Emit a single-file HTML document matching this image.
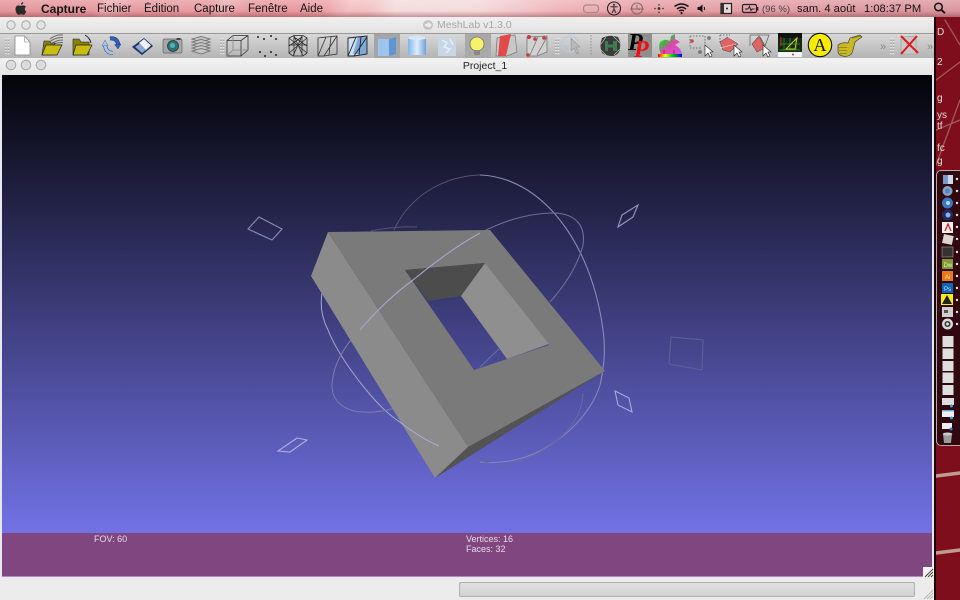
<!DOCTYPE html>
<html lang="fr"><head><meta charset="utf-8"><title>MeshLab</title>
<style>
html,body{margin:0;padding:0;width:960px;height:600px;overflow:hidden;background:#7a0f1c}
body{position:relative;font-family:"Liberation Sans",sans-serif}
.a{position:absolute}
#desk{left:0;top:0;width:960px;height:600px;background:#7e0e1c}
#menu{left:0;top:0;width:960px;height:17px;background:
linear-gradient(180deg,rgba(255,255,255,.22),rgba(255,255,255,0) 65%,rgba(120,40,50,.4)),
linear-gradient(115deg,transparent 0,transparent 90px,rgba(255,255,255,.22) 100px,transparent 125px,transparent 195px,rgba(255,255,255,.2) 205px,transparent 225px,transparent 300px,rgba(255,255,255,.25) 320px,transparent 340px),
linear-gradient(90deg,#e5949b 0,#e69ba0 180px,#e8999f 300px,#eeacb0 350px,#f5dcdc 395px,#f4d8d8 480px,#eeb4b9 560px,#e6a0a6 640px,#e19ca3 800px,#d9959c 960px);
box-sizing:border-box}
.m{position:absolute;top:3px;font-size:11.500px;line-height:13px;color:#111;white-space:nowrap;filter:blur(.2px)}
#win{left:0;top:17px;width:934px;height:583px;background:#ececec}
#tb{left:0;top:17px;width:934px;height:16px;background:linear-gradient(#f0f0f0,#e2e2e2)}
#title{left:437px;top:19px;font-size:10.500px;line-height:13px;color:#a8a8a8;font-weight:normal;white-space:nowrap;filter:blur(.2px)}
#tool{left:0;top:33px;width:934px;height:25px;background:linear-gradient(#d8d8d8,#b4b4b4);border-top:1px solid #989898;box-sizing:border-box}
#sub{left:0;top:58px;width:934px;height:17px;background:linear-gradient(#f2f2f2,#e6e6e6);border-radius:5px 5px 0 0}
#proj{left:0;top:60px;width:970px;text-align:center;font-size:10.500px;line-height:12px;color:#222;filter:blur(.2px)}
#fr{left:0;top:75px;width:934px;height:503px;background:#e8e8f4}
#gl{left:2px;top:75px;width:930px;height:458px;background:linear-gradient(#030308,#7272e6)}
#bar{left:2px;top:533px;width:930px;height:44px;background:#7f4680;border-bottom:1px solid #b58ab8;box-sizing:border-box}
.t{position:absolute;font-size:9px;line-height:10px;color:#e6dae8;white-space:nowrap;filter:blur(.2px)}
#prog{left:459px;top:582px;width:456px;height:15px;box-sizing:border-box;background:linear-gradient(#e0e0e0,#d2d2d2);border:1px solid #b0b0b0;border-radius:2px}
#dock{left:936px;top:170px;width:30px;height:276px;box-sizing:border-box;background:#300810;border:1px solid #b8a8a8;border-radius:5px 0 0 5px}
.d{position:absolute;left:937px;font-size:10px;line-height:11px;color:#e4dcdc;filter:blur(.3px)}
#icons,#scene,#desksvg,#docksvg,#menusvg{position:absolute;left:0;top:0}
#icons,#docksvg,#menusvg{filter:blur(.35px)}
</style></head><body>
<div class="a" id="desk"></div>
<svg id="desksvg" width="960" height="600" viewBox="0 0 960 600" fill="none">
<g stroke="#c9b5a5" stroke-linecap="round">
<path d="M936 80L960 62M945 20L960 45M936 130L960 120M936 165L960 100" stroke-width="1.300" opacity=".45"/>
<path d="M936 476L960 473" stroke-width="3.500" opacity=".85"/>
<path d="M936 553L960 550" stroke-width="3.500" opacity=".85"/>
</g>
</svg>
<span class="d" style="top:27px">D</span><span class="d" style="top:57px">2</span><span class="d" style="top:93px">g</span><span class="d" style="top:110px">ys</span><span class="d" style="top:121px">tf</span><span class="d" style="top:143px">fc</span><span class="d" style="top:156px">g</span>

<div class="a" id="dock"></div>
<svg id="docksvg" width="960" height="600" viewBox="0 0 960 600">
<rect x="943" y="175" width="10" height="9" fill="#7a98c8"/><rect x="948" y="175" width="5" height="9" fill="#cfd8e8"/>
<circle cx="947.500" cy="191" r="5" fill="#8aa0c0"/><circle cx="947.500" cy="191" r="2.500" fill="#4f88cc"/>
<circle cx="947.500" cy="203" r="5.500" fill="#3a78c0"/><circle cx="948" cy="203" r="2" fill="#b9d4ee"/>
<circle cx="947.500" cy="215" r="5.500" fill="#1e2c66"/><circle cx="948" cy="215" r="2.500" fill="#8fb0e0"/>
<rect x="942" y="222" width="11" height="11" fill="#f4f0f0"/><path d="M945 231L948 224L951 231" stroke="#d02020" stroke-width="1.300" fill="none"/>
<rect x="943" y="235" width="10" height="9" fill="#ddd6cc" transform="rotate(12 948 239)"/>
<rect x="942" y="247" width="11" height="10" fill="#333" stroke="#999" stroke-width=".6"/>
<rect x="942" y="259" width="11" height="10" fill="#7d9b30"/><text x="943.500" y="267" font-size="6" fill="#e6f0c8" font-family="Liberation Sans, sans-serif">Dw</text>
<rect x="942" y="271" width="11" height="10" fill="#e87818"/><text x="945" y="279" font-size="6" fill="#fbe0b8" font-family="Liberation Sans, sans-serif">Ai</text>
<rect x="942" y="283" width="11" height="10" fill="#0a68b4"/><text x="944" y="291" font-size="6" fill="#c4e2fa" font-family="Liberation Sans, sans-serif">Ps</text>
<rect x="941" y="294" width="12" height="11" fill="#f4ec20"/><path d="M947 295L952 304H942Z" fill="#222"/>
<rect x="942" y="307" width="11" height="10" fill="#cfcfcf"/><rect x="944" y="310" width="4" height="3" fill="#555"/>
<circle cx="947.500" cy="324" r="5.500" fill="#d8d8d8"/><circle cx="947.500" cy="324" r="3" fill="#333"/><circle cx="947.500" cy="324" r="1.500" fill="#cfe8d0"/>
<g fill="#dedede"><rect x="942.500" y="336" width="11" height="11"/><rect x="942.500" y="348.500" width="11" height="10.500"/><rect x="942.500" y="361" width="11" height="10"/><rect x="942.500" y="372.500" width="11" height="10.500"/><rect x="942.500" y="385" width="11" height="10"/></g>
<rect x="942" y="398" width="12" height="7" fill="#ddd"/><circle cx="951.500" cy="406" r="1.500" fill="#3aa0d0"/>
<rect x="942" y="410" width="12" height="7" fill="#f0f0f0"/><rect x="942" y="410" width="12" height="1.500" fill="#6ab0e0"/><circle cx="951.500" cy="418" r="1.500" fill="#3aa0d0"/>
<rect x="942" y="423" width="10" height="6" fill="#eee"/><circle cx="951" cy="429" r="1.500" fill="#3a78d0"/>
<path d="M943 434H952L951 443H944Z" fill="#9b9b9b"/><ellipse cx="947.500" cy="434" rx="4.800" ry="1.500" fill="#ccc"/>
<g fill="#e4e4e4"><circle cx="957" cy="179" r="1.200"/><circle cx="957" cy="191" r="1.200"/><circle cx="957" cy="203" r="1.200"/><circle cx="957" cy="215" r="1.200"/><circle cx="957" cy="227" r="1.200"/><circle cx="957" cy="239" r="1.200"/><circle cx="957" cy="252" r="1.200"/><circle cx="957" cy="264" r="1.200"/><circle cx="957" cy="276" r="1.200"/><circle cx="957" cy="288" r="1.200"/><circle cx="957" cy="300" r="1.200"/><circle cx="957" cy="312" r="1.200"/><circle cx="957" cy="324" r="1.200"/></g>
</svg>

<div class="a" id="menu"></div>
<span class="m" style="left:41px;font-weight:bold;font-size:12px">Capture</span>
<span class="m" style="left:97px">Fichier</span>
<span class="m" style="left:144px">Édition</span>
<span class="m" style="left:194px">Capture</span>
<span class="m" style="left:248px">Fenêtre</span>
<span class="m" style="left:300px">Aide</span>
<span class="m" style="left:762px;font-size:9.500px;top:3px;color:#444">(96 %)</span>
<span class="m" style="left:797px;font-size:11.200px">sam. 4 août</span>
<span class="m" style="left:864px;font-size:11.200px">1:08:37 PM</span>
<svg id="menusvg" width="960" height="17" viewBox="0 0 960 17">
<path transform="translate(0.500,0.800)" d="M21.500 3.800C22.300 2.900 22.800 2.200 22.800 1.200C21.600 1.400 20.500 2.300 20.400 3.700C20.900 3.900 21.200 3.900 21.500 3.800ZM25.500 6C24.700 5 23.700 4.600 22.800 4.600C21.700 4.600 21.300 5.100 20.500 5.100C19.700 5.100 19 4.600 18 4.600C16.500 4.600 15 5.900 15 8.400C15 11 16.800 14.100 18.300 14.100C19.100 14.100 19.500 13.500 20.600 13.500C21.700 13.500 22 14.100 22.900 14.100C24.200 14.100 25.200 12 25.700 10.600C24.100 9.900 23.700 7.300 25.500 6Z" fill="#2a2a2a"/>
<rect x="583.500" y="5" width="15" height="7.500" rx="3" fill="none" stroke="#a58a8c" stroke-width="1.200"/>
<circle cx="614" cy="8.500" r="6.500" fill="none" stroke="#222" stroke-width="1.100"/><path d="M610.500 6.800H617.500M614 6.800V9.500L612 12.800M614 9.500L616 12.800" stroke="#222" stroke-width="1" fill="none"/><circle cx="614" cy="4.700" r="1" fill="#222"/>
<circle cx="637" cy="8.500" r="5.500" fill="none" stroke="#8a6a6c" stroke-width="1.100"/><path d="M637 5V8.500L639.500 10M630 9H644" stroke="#8a6a6c" fill="none"/>
<g fill="#333"><circle cx="659" cy="8.500" r="1.400"/><circle cx="655" cy="8.500" r=".8"/><circle cx="663" cy="8.500" r=".8"/><circle cx="659" cy="4.800" r=".8"/><circle cx="659" cy="12.300" r=".8"/></g>
<path d="M674.500 6.500Q681.500 1.500 688.500 6.500M677 9Q681.500 5.500 686 9M679 11Q681.500 9.500 684 11" fill="none" stroke="#111" stroke-width="1.500"/><circle cx="681.500" cy="13" r="1.100" fill="#111"/>
<path d="M697.500 7H699.500L702.500 4.500V12.500L699.500 10H697.500Z" fill="#111"/><path d="M704 7Q705.200 8.500 704 10" stroke="#111" fill="none"/>
<rect x="721" y="3.500" width="10.500" height="10" fill="#e8d8d8" stroke="#222" stroke-width="1.200"/><rect x="721" y="3.500" width="3" height="10" fill="#333"/><circle cx="727" cy="8.500" r="1" fill="#222"/>
<rect x="742.500" y="4.500" width="14" height="8" rx="1.500" fill="none" stroke="#222" stroke-width="1.200"/><rect x="756.500" y="7" width="1.800" height="3.500" fill="#222"/><path d="M745 9H748L749.500 6.300L751 10.500L752 9H754.500" stroke="#222" fill="none"/>
<circle cx="938.500" cy="7" r="3.800" fill="none" stroke="#111" stroke-width="1.500"/><path d="M941.300 9.800L945 13.200" stroke="#111" stroke-width="1.900"/>
</svg>

<div class="a" id="win"></div>
<div class="a" id="tb"></div>
<div class="a" id="title">MeshLab v1.3.0</div>
<div class="a" id="tool"></div>
<div class="a" id="sub"></div>
<div class="a" id="proj">Project_1</div>
<div class="a" id="fr"></div>
<div class="a" id="gl"></div>
<div class="a" id="bar"></div>
<span class="t" style="left:94px;top:534px">FOV: 60</span>
<span class="t" style="left:466px;top:534px">Vertices: 16</span>
<span class="t" style="left:466px;top:544px">Faces: 32</span>
<div class="a" id="prog"></div>
<div class="a" style="left:923px;top:567px;width:11px;height:11px;background:#f4f4f4"></div>
<div class="a" style="left:934px;top:17px;width:2px;height:583px;background:#1a0408"></div>

<svg id="scene" width="960" height="600" viewBox="0 0 960 600" fill="none">
<g stroke-width="1.100">
<path d="M259 217L282 229L272 240L248 229Z" stroke="#8f8db8"/>
<path d="M638 205L633 217L618 227L622 215Z" stroke="#9a98c4"/>
<path d="M297 438L307 440L290 452L278 451Z" stroke="#b0aee0"/>
<path d="M615 391L629 398L632 412L618 405Z" stroke="#a9a8e0"/>
<path d="M671 337L703 340L702 370L669 364Z" stroke="#5f5d9a"/>
</g>
<path d="M394 230C410 195 445 176 480 175" stroke="#55546e" stroke-width="1"/>
<path d="M480 175C540 177 591 240 603 330C606 350 604 368 600 385" stroke="#8b89b8" stroke-width="1.100"/>
<path d="M600 385C590 420 545 460 500 462C490 463 485 463 480 462" stroke="#8583bc" stroke-width="1.100"/>
<path d="M583 393C582 420 560 450 507 465C497 466 488 464 464 455" stroke="#6a68a0" stroke-width="1"/>
<path d="M480 233C505 220 530 213 555 213C575 214 586 225 583 245C578 265 565 285 550 302" stroke="#6f6d99" stroke-width="1.100"/>
<path d="M322 293C320 305 322 318 328 330C340 360 375 405 397 420" stroke="#a9a7d4" stroke-width="1"/>
<path d="M360 330C345 345 332 365 332 387C333 405 350 412 363 412C375 413 385 411 395 408" stroke="#7c7ab0" stroke-width="1"/>
<path d="M311 276L328 232L468 447L435 478Z" fill="#8b8b8b"/>
<path fill-rule="evenodd" d="M328 232L490 230L605 371L468 447ZM405 270L474 370L549 345L485 263Z" fill="#7a7a7a"/>
<path d="M435 478L468 447L605 371Z" fill="#535353"/>
<path d="M405 270L485 263L461 296L428 301Z" fill="#4c4c4c"/>
<path d="M485 263L549 344L507 359L461 296Z" fill="#8f8f8f"/>
<path d="M360 330C375 312 395 293 413 280C435 262 458 245 480 233" stroke="#a8a6cc" stroke-width="1.100"/>
<path d="M397 420C410 430 425 440 439 446" stroke="#aeacd6" stroke-width="1"/>
<path d="M480 367L500 348" stroke="#6d6ca8" stroke-width="1"/>
<path d="M371 231Q395 226 417 227" stroke="#55546e" stroke-width="1"/>
</svg>

<svg id="icons" width="960" height="76" viewBox="0 0 960 76" fill="none" font-family="Liberation Sans, sans-serif">
<defs>
<linearGradient id="sm" x1="0" x2="1" y1="0" y2="0"><stop offset="0" stop-color="#7fb4ee"/><stop offset=".5" stop-color="#e0eefa"/><stop offset="1" stop-color="#6ea2dc"/></linearGradient>
<linearGradient id="rb"><stop offset="0" stop-color="#f00"/><stop offset=".3" stop-color="#ff0"/><stop offset=".6" stop-color="#0c0"/><stop offset="1" stop-color="#00f"/></linearGradient>
<linearGradient id="rab" x1="0" x2="1" y1="0" y2="1"><stop offset="0" stop-color="#e8e020"/><stop offset=".3" stop-color="#30c040"/><stop offset=".55" stop-color="#e840b0"/><stop offset="1" stop-color="#c060e0"/></linearGradient>
</defs>
<g stroke="#a8a8a8" stroke-width="1" fill="#e4e4e4"><circle cx="11" cy="25" r="4.200"/><circle cx="26" cy="25" r="4.200"/><circle cx="41" cy="25" r="4.200"/></g>
<g stroke="#a8a8a8" stroke-width="1" fill="#dcdcdc"><circle cx="11" cy="65" r="4.800"/><circle cx="26" cy="65" r="4.800"/><circle cx="41" cy="65" r="4.800"/></g>
<circle cx="428" cy="25" r="5" fill="#c4c4c4"/><path d="M424 25L429 22.500L432 25L429 27.500Z" fill="#eee"/>
<!-- grips -->
<g stroke-width="1.500" stroke-dasharray="1.500 1.500">
<path d="M6 38V55M8.500 38V55M221 38V55M223.500 38V55M556 38V55M558.500 38V55M891 38V55M893.500 38V55" stroke="#e6e6e6"/>
<path d="M6 39.500V55M8.500 39.500V55M221 39.500V55M223.500 39.500V55M556 39.500V55M558.500 39.500V55M891 39.500V55M893.500 39.500V55" stroke="#a6a6a6"/>
</g>
<path d="M591 35V56" stroke="#8f8f8f" stroke-dasharray="1.500 1.500"/>
<!-- new -->
<path d="M15 36H24.500L30 42V55H15Z" fill="#fff" stroke="#8a8a8a" stroke-width=".8"/><path d="M24.500 36V42H30" stroke="#aaa" stroke-width=".8"/>
<!-- open stack -->
<g stroke="#6a6a6a" stroke-width="1"><path d="M50 39Q56 34 63 35M50 41.500Q56 37 63 37.500M51 44Q56 40 63 40M51 46Q56 42 63 42.500M52 47.500Q57 44 62 45"/></g>
<path d="M44 41H49L51 43H55L52 55H42Z" fill="#8a8008" stroke="#222" stroke-width=".6"/><path d="M46 45H62L57 55H42Z" fill="#c8bc10" stroke="#222" stroke-width=".7"/>
<!-- open recent -->
<path d="M73 39H79L81 42H89V55H73Z" fill="#8a8008" stroke="#222" stroke-width=".6"/><path d="M76 45H92L87 55H73Z" fill="#c8bc10" stroke="#222" stroke-width=".7"/>
<path d="M85 35Q90 38 91 43" stroke="#222" stroke-width="1"/>
<!-- reload -->
<path d="M110 38.500Q117 37.500 118.500 45" stroke="#1f3c78" stroke-width="4"/><path d="M110 38.500Q117 37.500 118.500 45" stroke="#2d62b8" stroke-width="2.800"/><path d="M114.500 44.500L121 44L118 49Z" fill="#2d62b8" stroke="#1f3c78" stroke-width=".4"/>
<path d="M113 53Q106 53 105 45" stroke="#3d5a94" stroke-width="4"/><path d="M113 53Q106 53 105 45" stroke="#a8c4ea" stroke-width="2.800"/><path d="M102 46L108 45.500L105 40Z" fill="#a8c4ea" stroke="#3d5a94" stroke-width=".4"/>
<!-- save -->
<path d="M132 47L144 38L153 46L142 55Z" fill="#17305e"/><path d="M139 43L144 39L151 45.500L146 50Z" fill="#f0f2f8"/><path d="M135 47L140 43.500L146 50L142 53Z" fill="#8ea8d6"/>
<!-- camera -->
<rect x="163" y="39" width="19" height="14" rx="1.500" fill="#a8a8a8" stroke="#666" stroke-width=".7"/><circle cx="173" cy="46" r="5.500" fill="#26757c" stroke="#333" stroke-width=".8"/><circle cx="172.500" cy="45.500" r="2.500" fill="#5bb0b4"/><rect x="176.500" y="38" width="4" height="2" fill="#444"/>
<!-- layers -->
<g stroke="#727272" stroke-width=".9" fill="#c4c4c4"><path d="M192 39L201 36.500L210 39L201 42Z"/><path d="M192 42L201 39.500L210 42L201 45Z"/><path d="M192 45L201 42.500L210 45L201 48Z"/><path d="M192 48L201 45.500L210 48L201 51Z"/><path d="M192 51L201 48.500L210 51L201 54Z"/></g>
<!-- box -->
<g stroke="#333" stroke-width=".8"><path d="M227 40.500H241V56H227ZM227 40.500L233 35.500H248V50L241 56M241 40.500L248 35.500"/><path d="M233 35.500V50H248M233 50L227 56" stroke="#888"/></g>
<!-- points -->
<g fill="#222"><circle cx="258" cy="37" r="1"/><circle cx="264" cy="39" r="1"/><circle cx="271" cy="36" r="1"/><circle cx="276" cy="39" r="1"/><circle cx="260" cy="52" r="1"/><circle cx="265" cy="56" r="1"/><circle cx="271" cy="52" r="1"/><circle cx="276" cy="55" r="1"/></g>
<!-- wire 1 -->
<g stroke="#2a2a2a" stroke-width=".8"><path d="M289 38L294 35.500H303L307 38V53L303 56H293L289 53ZM289 38L307 53M307 38L289 53M294 36V55M302 36V55M289 45H307M294 37L307 46M302 37L289 46M293 56L302 36M303 56L294 36"/></g>
<!-- wire 2 -->
<g stroke="#333" stroke-width=".8"><path d="M318 38L337 36V54L324 56H318ZM326 37L318 56M337 36L324 56M331 37L329 55M318 38L326 37"/></g>
<!-- wire 3 -->
<path d="M348 38L367 36V54L354 56H348Z" fill="#cfe0f4"/><path d="M358 37H367V54H353Z" fill="#7da9da"/>
<g stroke="#222" stroke-width=".9"><path d="M348 38L367 36V54L354 56H348ZM356 37L348 56M367 37L354 56M361 37L359 55"/></g>
<!-- flat (selected) -->
<rect x="374" y="34" width="26" height="24" fill="#a5a5a5"/>
<path d="M378 39H389L396 37V54L389 56H378Z" fill="#9cc4ee"/><path d="M389 39L396 37V54L389 56Z" fill="#5f95d2"/>
<!-- smooth -->
<path d="M408 38H426V55H408Z" fill="url(#sm)"/><ellipse cx="417" cy="38" rx="9" ry="2" fill="#d8e8f8"/>
<!-- texture -->
<path d="M438 38H456V56H438Z" fill="#c8d6e6"/><path d="M442 40l5 3-3 4 6 2-4 4M450 39l3 6" stroke="#e8eef6" stroke-width="1.500"/>
<!-- bulb sel -->
<rect x="465" y="34" width="26" height="24" fill="#a9a9a9"/>
<circle cx="477" cy="44" r="7" fill="#f6f26a" stroke="#555" stroke-width=".6"/><rect x="474" y="50" width="6" height="5" fill="#888"/>
<g transform="translate(480,0)">
<!-- red shape -->
<path d="M17 38L35 35L37 52L27 56H16Z" fill="#c8c8c8" stroke="#777" stroke-width=".7"/><path d="M20 36L31 34L26 56H18Z" fill="#e24a4a"/>
<path d="M47 37L67 36V52L57 56H47Z" stroke="#777" stroke-width=".8" fill="#d2d2d2"/><path d="M58 37L50 55M67 37L57 55" stroke="#777" stroke-width=".8"/><g fill="#c43c3c"><circle cx="49" cy="37" r="2"/><circle cx="55" cy="39" r="1.800"/><circle cx="64" cy="38" r="1.800"/><circle cx="48" cy="55" r="1.800"/></g>
<circle cx="90" cy="44" r="8" stroke="#b8ccdc" stroke-width="1"/><path d="M82 44H98M90 36V52" stroke="#c4d4e0" stroke-width=".8"/><path d="M91 38L91 51L94 48L97 54L99 53L96 47H100Z" fill="#b8b8b8" stroke="#888" stroke-width=".5"/>
<!-- green mesh -->
<path d="M122 38Q130 34 138 37Q141 42 140 48Q140 54 133 56Q126 56 122 53Q119 46 122 38Z" fill="#3a3a3a"/><path d="M125 41H128V44.500H133V41H137V51H133V47.500H128V51H125Z" fill="#3f7a50"/><path d="M121 44L126 37M133 36L140 43M121 50L127 56M134 55L140 49" stroke="#b0b0b0" stroke-width=".8"/>
<!-- PP -->
<rect x="148" y="33" width="24" height="24" fill="#8e8e8e"/>
<text x="148" y="50" font-family="Liberation Serif, serif" font-style="italic" font-weight="bold" font-size="24" fill="#000">P</text>
<text x="154" y="57" font-family="Liberation Serif, serif" font-style="italic" font-weight="bold" font-size="24" fill="#ee1010">P</text>
<!-- rabbit -->
<path d="M180 42Q185 38 190 41L191 36L195 34L195 39L200 42L195 45Q201 48 202 54H181Q178 48 180 42Z" fill="url(#rab)"/><path d="M184 54V50M194 54V50" stroke="#a02070" stroke-width="1"/><rect x="178" y="54" width="24" height="3" fill="url(#rb)"/>
<!-- select vertices -->
<path d="M210 36H225V50M210 36V48H222" stroke="#555" stroke-width=".8" stroke-dasharray="1.500 1.500"/><circle cx="212" cy="41" r="1.800" fill="#c44"/><circle cx="229" cy="38" r="1.900" fill="#777"/><circle cx="220" cy="52" r="1.900" fill="#777"/><path d="M225 45V56L228 53L230 57L232 56L230 52H233Z" fill="#fff" stroke="#222" stroke-width=".6"/>
<!-- select faces -->
<path d="M240 35H250M240 35V44" stroke="#555" stroke-width=".8" stroke-dasharray="1.500 1.500"/><path d="M240 42L248 37L258 44L250 52L243 50Z" fill="#e06464" stroke="#555" stroke-width=".6"/><path d="M248 37L260 44M240 48L256 44" stroke="#eee" stroke-width=".6"/><path d="M254 45V56L257 53L259 57L261 56L259 52L262 52Z" fill="#fff" stroke="#222" stroke-width=".6"/>
<path d="M270 35H289L285 46L280 37M270 35V46" stroke="#666" stroke-width=".8"/><path d="M272 44L279 36L285 48L277 52Z" fill="#e06464" stroke="#555" stroke-width=".6"/><path d="M283 45V56L286 53L288 57L290 56L288 52L291 52Z" fill="#fff" stroke="#222" stroke-width=".6"/>
<!-- graph -->
<rect x="298" y="33" width="24" height="24" fill="#f4f4f4"/><rect x="298" y="33" width="24" height="19" fill="#152a14"/><path d="M298 33H322V38H298Z" fill="#111"/><path d="M300 50H320M304 38V50M310 38V50M316 38V50M300 44H320" stroke="#2fa030" stroke-width=".7"/><path d="M306 49L317 38L315 49Z" stroke="#d4c830" stroke-width="1"/><path d="M301 37V46" stroke="#d03030" stroke-width="1"/><circle cx="313" cy="54.500" r="1" fill="#c03030"/>
<!-- A -->
<circle cx="340" cy="45" r="11.700" fill="#f6ec00" stroke="#111" stroke-width="1.100"/><text x="340" y="51" text-anchor="middle" font-family="Liberation Serif, serif" font-size="18" fill="#111">A</text>
<!-- thumb -->
<path d="M358 45Q362 42 368 43L370 38L380 35L382 37L375 42L373 50Q372 56 365 56.500Q359 56 358 52Z" fill="#c8b824" stroke="#444" stroke-width=".7"/><path d="M358 47.500H367M359 50.500H367M360 53.500H367M372 38L381 36" stroke="#6a6210" stroke-width=".6"/>
<text x="400" y="50" font-size="11" fill="#888">»</text>
<!-- X -->
<path d="M421 37L436 36V54H421Z" fill="#c8c8c8" stroke="#999" stroke-width=".6"/><path d="M421 36L438 53M437 36L421 54" stroke="#e21818" stroke-width="2"/>
<text x="447" y="50" font-size="11" fill="#888">»</text>
</g>
</svg>
<svg class="a" style="left:923px;top:567px" width="37" height="33" viewBox="0 0 37 33" fill="none"><path d="M2 10L10 2M5 10L10 5M8 10L10 8" stroke="#444" stroke-width="1"/><path d="M1 32L10 23M4 32L10 26M7 32L10 29" stroke="#bbb" stroke-width="1"/></svg>
</body></html>
